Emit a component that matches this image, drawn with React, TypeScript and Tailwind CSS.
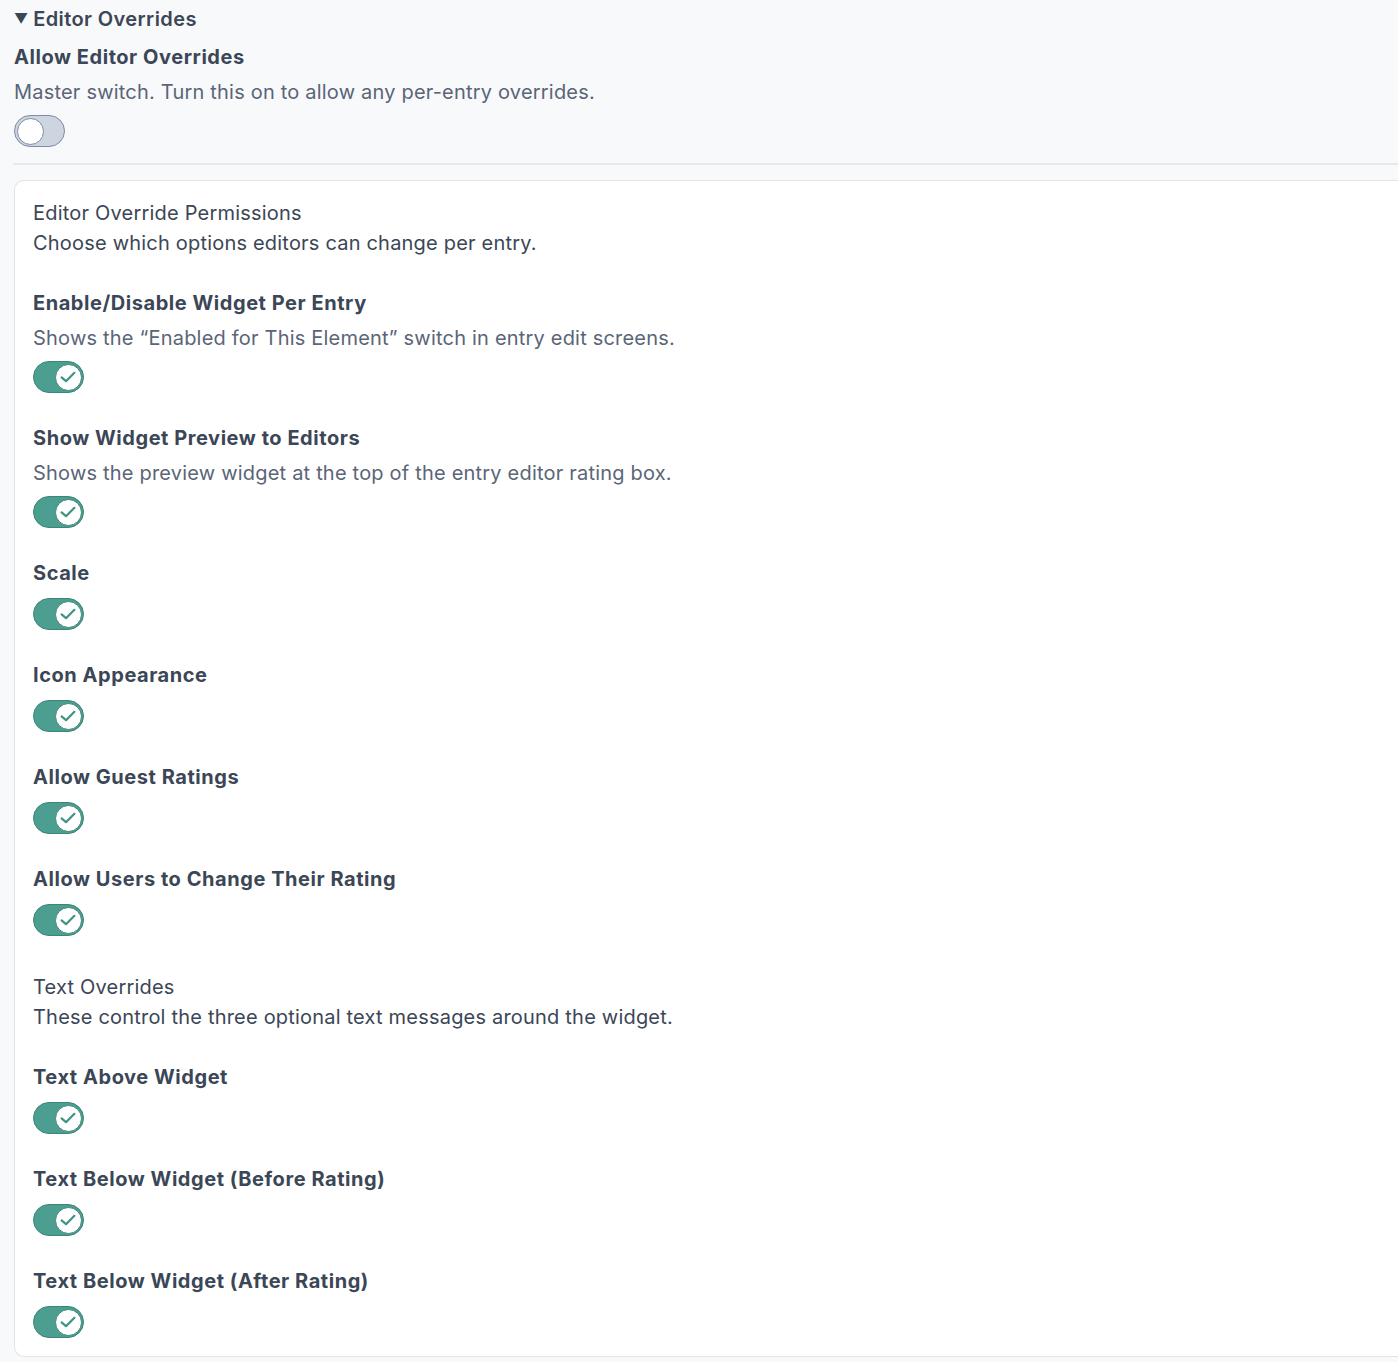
import { FC, ReactElement } from "react";

interface IToggleProps {
  checked: boolean;
}

interface IFieldProps {
  title: string;
  description?: string;
  checked?: boolean;
}

const Toggle: FC<IToggleProps> = ({ checked }): ReactElement => {
  return (
    <div
      className={`flex h-[32px] w-[51px] items-center rounded-full border-[1.5px] px-[1.5px] ${
        checked
          ? "justify-end border-[#3b8677] bg-[#4c9f90]"
          : "justify-start border-[#7c8ca6] bg-[#cdd5e0]"
      }`}
    >
      <div
        className={`flex h-[27px] w-[27px] shrink-0 items-center justify-center rounded-full border-[1.5px] bg-white ${
          checked ? "border-[#3b8677]" : "border-[#7c8ca6]"
        }`}
      >
        {checked && (
          <svg width="20" height="20" viewBox="0 0 20 20" fill="none" className="shrink-0">
            <path
              d="M3.6 10.4 L8 14.2 L16.4 5.8"
              stroke="#3f9383"
              strokeWidth="2.2"
              strokeLinecap="round"
              strokeLinejoin="round"
            />
          </svg>
        )}
      </div>
    </div>
  );
};

const Field: FC<IFieldProps> = ({
  title,
  description,
  checked = true
}): ReactElement => {
  return (
    <div>
      <div className="text-[20px] font-bold leading-[28px] tracking-[0.55px] text-[#3b4656]">
        {title}
      </div>
      {description && (
        <div className="mt-[7px] text-[20px] leading-[28px] tracking-[0.2px] text-[#5a6577]">
          {description}
        </div>
      )}
      <div className={description ? "mt-[9px]" : "mt-[11px]"}>
        <Toggle checked={checked} />
      </div>
    </div>
  );
};

const App: FC = (): ReactElement => {
  return (
    <div className="min-h-[1362px] bg-[#f8f9fb] pl-[13px] pb-[5px] font-['Inter','Noto_Sans',sans-serif] text-[#3b4656]">
      <div className="flex h-[36px] items-center pt-[1px] pl-[1px]">
        <span className="mr-[5px] text-[14px] leading-none text-[#3b4656]">▼</span>
        <span className="text-[20px] font-semibold leading-[28px] tracking-[0.4px]">
          Editor Overrides
        </span>
      </div>

      <div className="pl-[1px]">
        <div className="mt-[7px] text-[20px] font-bold leading-[28px] tracking-[0.55px]">
          Allow Editor Overrides
        </div>
        <div className="mt-[7px] text-[20px] leading-[28px] tracking-[0.2px] text-[#5a6577]">
          Master switch. Turn this on to allow any per-entry overrides.
        </div>
        <div className="mt-[9px]">
          <Toggle checked={false} />
        </div>
      </div>

      <div className="mt-[16px] border-t-2 border-[#e6e8ec]" />

      <div className="mt-[15px] ml-[1px] rounded-l-[10px] border-y border-l border-[#e1e4e9] bg-white pt-[17px] pb-[18px] pl-[18px]">
        <div className="text-[20px] leading-[30px] tracking-[0.2px] text-[#3b4656]">
          <div>Editor Override Permissions</div>
          <div>Choose which options editors can change per entry.</div>
        </div>

        <div className="mt-[31px] flex flex-col gap-[31px]">
          <Field
            title="Enable/Disable Widget Per Entry"
            description="Shows the “Enabled for This Element” switch in entry edit screens."
          />
          <Field
            title="Show Widget Preview to Editors"
            description="Shows the preview widget at the top of the entry editor rating box."
          />
          <Field title="Scale" />
          <Field title="Icon Appearance" />
          <Field title="Allow Guest Ratings" />
          <Field title="Allow Users to Change Their Rating" />
        </div>

        <div className="mt-[36px] text-[20px] leading-[30px] tracking-[0.2px] text-[#3b4656]">
          <div>Text Overrides</div>
          <div>These control the three optional text messages around the widget.</div>
        </div>

        <div className="mt-[31px] flex flex-col gap-[31px]">
          <Field title="Text Above Widget" />
          <Field title="Text Below Widget (Before Rating)" />
          <Field title="Text Below Widget (After Rating)" />
        </div>
      </div>
    </div>
  );
};

export default App;
